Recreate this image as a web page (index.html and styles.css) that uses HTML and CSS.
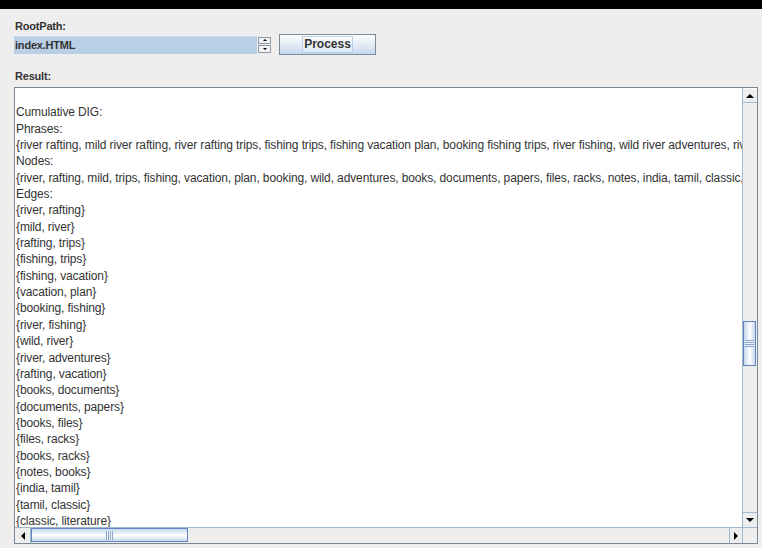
FILE: index.html
```html
<!DOCTYPE html>
<html>
<head>
<meta charset="utf-8">
<title>DIG Builder</title>
<link rel="stylesheet" href="styles.css">
</head>
<body>
<div class="titlebar"></div>
<main class="panel">
  <div class="label label-root">RootPath:</div>
  <div class="input-row">
    <div class="combo">
      <div class="field">index.HTML</div>
      <div class="spinner">
        <div class="spin-btn"><span class="tri tri-up-sm"></span></div>
        <div class="spin-btn"><span class="tri tri-down-sm"></span></div>
      </div>
    </div>
    <button class="btn"><span class="btn-focus">Process</span></button>
  </div>
  <div class="label label-result">Result:</div>
  <div class="scrollpane">
    <div class="viewport"><pre class="output">

Cumulative DIG:
Phrases:
{river rafting, mild river rafting, river rafting trips, fishing trips, fishing vacation plan, booking fishing trips, river fishing, wild river adventures, river adventures, rafting vacation}
Nodes:
{river, rafting, mild, trips, fishing, vacation, plan, booking, wild, adventures, books, documents, papers, files, racks, notes, india, tamil, classic, literature}
Edges:
{river, rafting}
{mild, river}
{rafting, trips}
{fishing, trips}
{fishing, vacation}
{vacation, plan}
{booking, fishing}
{river, fishing}
{wild, river}
{river, adventures}
{rafting, vacation}
{books, documents}
{documents, papers}
{books, files}
{files, racks}
{books, racks}
{notes, books}
{india, tamil}
{tamil, classic}
{classic, literature}</pre></div>
    <div class="vbar">
      <div class="arrow-btn arrow-up"><span class="tri tri-up"></span></div>
      <div class="vtrack">
        <div class="vthumb"><span class="grip grip-h"></span></div>
      </div>
      <div class="arrow-btn arrow-down"><span class="tri tri-down"></span></div>
    </div>
    <div class="hbar">
      <div class="arrow-btn arrow-left"><span class="tri tri-left"></span></div>
      <div class="htrack">
        <div class="hthumb"><span class="grip grip-v"></span></div>
      </div>
      <div class="arrow-btn arrow-right"><span class="tri tri-right"></span></div>
    </div>
    <div class="corner"></div>
  </div>
</main>
</body>
</html>
```

FILE: styles.css
```css
html, body {
  margin: 0;
  padding: 0;
  background: #eeeeee;
}

body {
  font-family: "Liberation Sans", Arial, sans-serif;
  color: #333333;
  width: 762px;
  height: 548px;
  overflow: hidden;
}

.titlebar {
  height: 9px;
  background: #000000;
}

.panel {
  padding: 0 4px 0 14px;
}

.label {
  font-weight: bold;
  font-size: 11px;
  line-height: 13px;
  letter-spacing: -0.2px;
  color: #333333;
}

.label-root {
  margin-top: 11px;
  padding-left: 1px;
}

.label-result {
  margin-top: 15px;
  padding-left: 1px;
}

.input-row {
  display: flex;
  align-items: center;
  gap: 8px;
  margin-top: 1px;
  height: 21px;
}

.combo {
  display: flex;
  width: 257px;
  height: 18px;
}

.field {
  flex: 1;
  background: #b8cfe5;
  font-weight: bold;
  font-size: 11px;
  line-height: 17px;
  letter-spacing: -0.2px;
  color: #333333;
  padding-left: 1px;
  border-top: 1px solid #c9dbed;
  box-sizing: border-box;
}

.spinner {
  width: 14px;
  display: flex;
  flex-direction: column;
  gap: 1px;
  padding: 1px 0 1px 1px;
  box-sizing: border-box;
}

.spin-btn {
  flex: 1;
  background: #f4f4f4;
  border: 1px solid #8e9aa6;
  display: flex;
  align-items: center;
  justify-content: center;
}

.btn {
  width: 97px;
  height: 21px;
  margin: 0;
  padding: 0;
  border: 1px solid #7a8a99;
  background: linear-gradient(#ffffff 0%, #eef3f9 30%, #dde8f3 60%, #c6d8ec 100%);
  display: flex;
  align-items: center;
  justify-content: center;
  font-family: "Liberation Sans", Arial, sans-serif;
}

.btn-focus {
  font-weight: bold;
  font-size: 12px;
  line-height: 15px;
  color: #333333;
  padding: 0 1px;
  border: 1px solid #b8cfe5;
  background: rgba(255, 255, 255, 0.35);
}

.scrollpane {
  margin-top: 4px;
  width: 744px;
  height: 457px;
  box-sizing: border-box;
  border: 1px solid #7a8a99;
  display: grid;
  grid-template-columns: 1fr 15px;
  grid-template-rows: 1fr 16px;
  background: #ffffff;
}

.viewport {
  overflow: hidden;
  background: #ffffff;
}

.output {
  margin: 0;
  padding: 0 0 0 1px;
  font-family: "Liberation Sans", Arial, sans-serif;
  font-size: 12px;
  line-height: 16.35px;
  letter-spacing: -0.12px;
  color: #333333;
  white-space: pre;
}

/* vertical scrollbar */
.vbar {
  display: flex;
  flex-direction: column;
  background: #eeeeee;
  border-left: 1px solid #a3b8cc;
  box-sizing: border-box;
}

.vtrack {
  flex: 1;
  position: relative;
}

.vthumb {
  position: absolute;
  left: 0;
  right: 1px;
  top: 218px;
  height: 45px;
  box-sizing: border-box;
  border: 1px solid #6382bf;
  background: linear-gradient(90deg, #c6d8ec 0%, #e6eef7 30%, #ffffff 55%, #dde8f3 80%, #c6d8ec 100%);
  display: flex;
  align-items: center;
  justify-content: center;
}

/* horizontal scrollbar */
.hbar {
  display: flex;
  background: #eeeeee;
  border-top: 1px solid #a3b8cc;
  box-sizing: border-box;
}

.htrack {
  flex: 1;
  position: relative;
}

.hthumb {
  position: absolute;
  top: 0;
  bottom: 1px;
  left: 0;
  width: 157px;
  box-sizing: border-box;
  border: 1px solid #6382bf;
  background: linear-gradient(#c6d8ec 0%, #e6eef7 30%, #ffffff 55%, #dde8f3 80%, #c6d8ec 100%);
  display: flex;
  align-items: center;
  justify-content: center;
}

.corner {
  background: #eeeeee;
  border-top: 1px solid #a3b8cc;
  border-left: 1px solid #a3b8cc;
}

.grip-h {
  width: 9px;
  height: 7px;
  background: repeating-linear-gradient(#8da8cf 0 1px, #eef3f9 1px 2px);
}

.grip-v {
  width: 7px;
  height: 9px;
  background: repeating-linear-gradient(90deg, #8da8cf 0 1px, #eef3f9 1px 2px);
}

.arrow-btn {
  background: #eeeeee;
  display: flex;
  align-items: center;
  justify-content: center;
  box-sizing: border-box;
}

.arrow-up,
.arrow-down {
  height: 15px;
}

.arrow-up {
  border-bottom: 1px solid #a3b8cc;
  border-top: 1px solid #ffffff;
}

.arrow-down {
  border-top: 1px solid #a3b8cc;
}

.arrow-left,
.arrow-right {
  width: 15px;
}

.arrow-left {
  border-right: 1px solid #a3b8cc;
  width: 16px;
}

.arrow-right {
  border-left: 1px solid #a3b8cc;
  width: 13px;
}

/* arrow glyphs */
.tri {
  width: 0;
  height: 0;
  display: block;
}

.tri-up {
  border-left: 4px solid transparent;
  border-right: 4px solid transparent;
  border-bottom: 4px solid #000000;
}

.tri-down {
  border-left: 4px solid transparent;
  border-right: 4px solid transparent;
  border-top: 4px solid #000000;
}

.tri-left {
  border-top: 4px solid transparent;
  border-bottom: 4px solid transparent;
  border-right: 4px solid #000000;
}

.tri-right {
  border-top: 4px solid transparent;
  border-bottom: 4px solid transparent;
  border-left: 4px solid #000000;
}

.tri-up-sm {
  border-left: 2px solid transparent;
  border-right: 2px solid transparent;
  border-bottom: 2px solid #000000;
}

.tri-down-sm {
  border-left: 2px solid transparent;
  border-right: 2px solid transparent;
  border-top: 2px solid #000000;
}
```
